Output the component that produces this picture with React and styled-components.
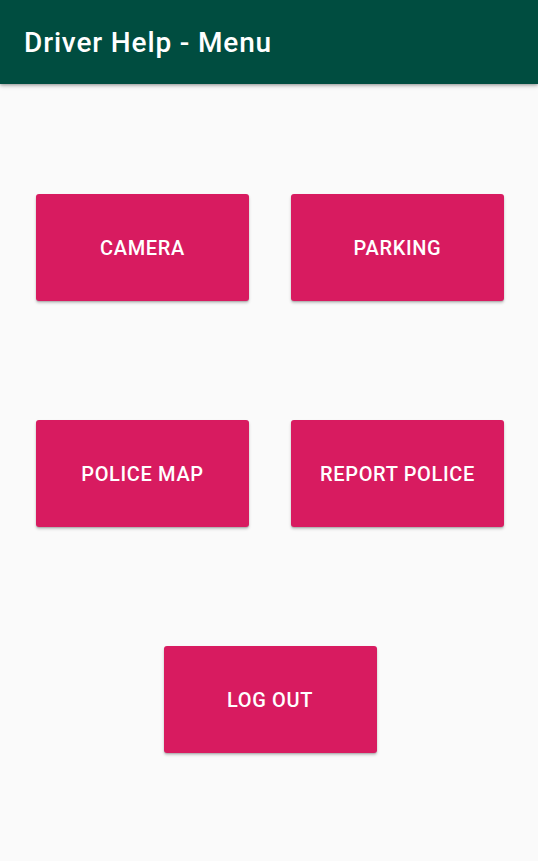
import React from "react";
import styled, { createGlobalStyle } from "styled-components";

const Global = createGlobalStyle`
  html, body { margin: 0; padding: 0; background: #fafafa; }
  body { font-family: Roboto, "Noto Sans", sans-serif; }
  * { box-sizing: border-box; }
`;

const Screen = styled.div`
  width: 538px;
  min-height: 861px;
  background: #fafafa;
  display: flex;
  flex-direction: column;
`;

const AppBar = styled.header`
  height: 84px;
  background: #004d40;
  display: flex;
  align-items: center;
  padding-left: 24px;
  box-shadow: 0 2px 4px rgba(0, 0, 0, 0.25), 0 1px 2px rgba(0, 0, 0, 0.15);
  position: relative;
  z-index: 1;
`;

const Title = styled.h1`
  margin: 0;
  color: #ffffff;
  font-family: Roboto, sans-serif;
  font-weight: 500;
  font-size: 28px;
  letter-spacing: 0.85px;
`;

const Menu = styled.main`
  padding: 110px 34px 0 36px;
  display: grid;
  grid-template-columns: 213px 213px;
  grid-auto-rows: 107px;
  column-gap: 42px;
  row-gap: 119px;
`;

const MenuButton = styled.button`
  border: none;
  border-radius: 3px;
  background: #d81b60;
  color: #ffffff;
  font-family: Roboto, sans-serif;
  font-weight: 500;
  font-size: 20px;
  letter-spacing: 0.65px;
  text-transform: uppercase;
  cursor: pointer;
  width: 213px;
  height: 107px;
  padding: 0;
  box-shadow: 0 2px 3px rgba(0, 0, 0, 0.22), 0 1px 1px rgba(0, 0, 0, 0.12);
  grid-column: ${(p) => (p.$wide ? "1 / span 2" : "auto")};
  justify-self: center;
`;

export default function App() {
  return (
    <Screen>
      <Global />
      <AppBar>
        <Title>Driver Help - Menu</Title>
      </AppBar>
      <Menu>
        <MenuButton>Camera</MenuButton>
        <MenuButton>Parking</MenuButton>
        <MenuButton>Police Map</MenuButton>
        <MenuButton>Report Police</MenuButton>
        <MenuButton $wide>Log Out</MenuButton>
      </Menu>
    </Screen>
  );
}
